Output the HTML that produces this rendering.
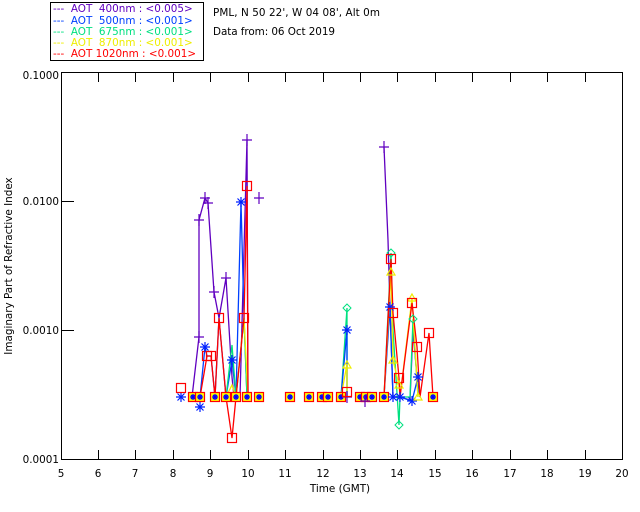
<!DOCTYPE html>
<html><head><meta charset="utf-8"><style>
html,body{margin:0;padding:0;background:#fff;width:640px;height:512px;overflow:hidden}
svg{display:block}
text{font-family:"DejaVu Sans","Liberation Sans",sans-serif;font-size:10.4px}
</style></head><body>
<svg width="640" height="512" viewBox="0 0 640 512" xmlns="http://www.w3.org/2000/svg">
<defs>
<g id="bm"><rect x="-4.5" y="-4.5" width="9" height="9" fill="#ff0" stroke="#f00" stroke-width="1.2"/><path d="M-3 0H3M0-3V3M-2-2L2 2M-2 2L2-2" stroke="#00f" stroke-width="1.3"/></g>
<g id="sq"><rect x="-4.5" y="-4.5" width="9" height="9" fill="none" stroke="#f00" stroke-width="1.2"/></g>
<g id="as"><path d="M-5 0H5M0-5V5M-3.5-3.5L3.5 3.5M-3.5 3.5L3.5-3.5" stroke="#0020ff" stroke-width="1.2"/></g>
<g id="pl"><path d="M-5 0H5M0-6V6" stroke="#6000c0" stroke-width="1.2"/></g>
<g id="dm"><path d="M0-4L4 0L0 4L-4 0Z" fill="none" stroke="#00e080" stroke-width="1"/></g>
<g id="tr"><path d="M0-4L4 3H-4Z" fill="none" stroke="#ee0" stroke-width="1.2"/></g>
</defs>
<rect x="50.5" y="2.5" width="153" height="58" fill="#fff" stroke="#000"/>
<text x="53" y="12" fill="#6000c0" xml:space="preserve">---  AOT  400nm : &lt;0.005&gt;</text>
<text x="53" y="24" fill="#0040ff" xml:space="preserve">---  AOT  500nm : &lt;0.001&gt;</text>
<text x="53" y="35" fill="#00e080" xml:space="preserve">---  AOT  675nm : &lt;0.001&gt;</text>
<text x="53" y="46" fill="#ee0" xml:space="preserve">---  AOT  870nm : &lt;0.001&gt;</text>
<text x="53" y="57" fill="#f00" xml:space="preserve">---  AOT 1020nm : &lt;0.001&gt;</text>
<text x="213" y="16" fill="#000" textLength="167">PML, N 50 22', W 04 08', Alt 0m</text>
<text x="213" y="35" fill="#000" textLength="122">Data from: 06 Oct 2019</text>
<rect x="61.5" y="72.5" width="561" height="387" fill="none" stroke="#000"/>
<g stroke="#000">
<path d="M62 201.5H74M62 330.5H74"/>
<path d="M98.5 460V450M135.5 460V450M173.5 460V450M210.5 460V450M248.5 460V450M285.5 460V450M323.5 460V450M360.5 460V450M397.5 460V450M435.5 460V450M472.5 460V450M510.5 460V450M547.5 460V450M585.5 460V450"/>
<path d="M98.5 72V82M135.5 72V82M173.5 72V82M210.5 72V82M248.5 72V82M285.5 72V82M323.5 72V82M360.5 72V82M397.5 72V82M435.5 72V82M472.5 72V82M510.5 72V82M547.5 72V82M585.5 72V82"/>
</g>
<g fill="#000" text-anchor="end">
<text x="59" y="79">0.1000</text><text x="59" y="205">0.0100</text><text x="59" y="334">0.0010</text><text x="59" y="463">0.0001</text>
</g>
<g fill="#000" text-anchor="middle">
<text x="61" y="477">5</text><text x="98" y="477">6</text><text x="135" y="477">7</text><text x="173" y="477">8</text><text x="210" y="477">9</text><text x="248" y="477">10</text><text x="285" y="477">11</text><text x="323" y="477">12</text><text x="360" y="477">13</text><text x="397" y="477">14</text><text x="435" y="477">15</text><text x="472" y="477">16</text><text x="510" y="477">17</text><text x="547" y="477">18</text><text x="585" y="477">19</text><text x="622" y="477">20</text>
<text x="340" y="492">Time (GMT)</text>
<text transform="translate(12,266) rotate(-90)">Imaginary Part of Refractive Index</text>
</g>
<g fill="none" stroke-width="1.3">
<polyline stroke="#6000c0" points="192,397 199,337 199,220 205,198 208,203 214,292 219,318 226,278 232,377 234,397 240,397 247,140 248,397"/>
<polyline stroke="#0040ff" points="200,397 205,347 207,356 211,356 215,397 219,318 226,397 232,360 236,397 241,202 244,318 247,397"/>
<polyline stroke="#00e080" points="226,397 232,345 236,397 244,318 247,397"/>
<polyline stroke="#ee0" points="226,397 232,385 236,397 244,318 248,397"/>
<polyline stroke="#f00" points="193,397 200,397 207,356 211,356 215,397 219,318 226,397 232,438 236,397 244,318 247,186 248,397"/>
<polyline stroke="#00e080" points="341,397 347,308 347,397"/>
<polyline stroke="#0040ff" points="341,397 347,330 347,397"/>
<polyline stroke="#ee0" points="341,397 347,364 347,392"/>
<polyline stroke="#6000c0" points="384,147 388,240 390,307 393,397 395,397 400,397 410,400 413,330 417,377 420,397"/>
<polyline stroke="#00e080" points="384,397 391,253 393,330 399,425 400,397 410,397 413,319 418,397"/>
<polyline stroke="#0040ff" points="384,397 390,307 393,397 400,397 412,401 418,377 420,397"/>
<polyline stroke="#ee0" points="384,397 391,272 393,360 399,385 400,397 412,298 418,397"/>
<polyline stroke="#f00" points="384,397 391,259 393,313 399,378 400,397 412,303 417,347 420,397 429,333 433,397"/>
</g>
<g>
<use href="#bm" x="193" y="397"/><use href="#bm" x="200" y="397"/><use href="#bm" x="215" y="397"/><use href="#bm" x="226" y="397"/><use href="#bm" x="236" y="397"/><use href="#bm" x="247" y="397"/><use href="#bm" x="259" y="397"/><use href="#bm" x="290" y="397"/><use href="#bm" x="309" y="397"/><use href="#bm" x="322" y="397"/><use href="#bm" x="328" y="397"/><use href="#bm" x="341" y="397"/><use href="#bm" x="360" y="397"/><use href="#bm" x="366" y="397"/><use href="#bm" x="372" y="397"/><use href="#bm" x="384" y="397"/><use href="#bm" x="433" y="397"/>
</g>
<use href="#as" x="181" y="397"/><use href="#sq" x="181" y="388"/>
<use href="#sq" x="207" y="356"/><use href="#sq" x="211" y="356"/><use href="#sq" x="219" y="318"/><use href="#sq" x="244" y="318"/><use href="#sq" x="247" y="186"/><use href="#sq" x="232" y="438"/>
<use href="#as" x="205" y="347"/><use href="#as" x="200" y="407"/><use href="#as" x="232" y="360"/><use href="#as" x="241" y="202"/>
<use href="#pl" x="199" y="337"/><use href="#pl" x="199" y="220"/><use href="#pl" x="205" y="198"/><use href="#pl" x="208" y="203"/><use href="#pl" x="214" y="292"/><use href="#pl" x="226" y="278"/><use href="#pl" x="247" y="140"/><use href="#pl" x="259" y="198"/>
<use href="#pl" x="384" y="147"/><use href="#pl" x="347" y="397"/><use href="#pl" x="365" y="401"/>
<use href="#dm" x="347" y="308"/><use href="#as" x="347" y="330"/><use href="#tr" x="347" y="365"/><use href="#sq" x="347" y="392"/>
<use href="#dm" x="391" y="253"/><use href="#sq" x="391" y="259"/><use href="#tr" x="391" y="272"/><use href="#as" x="390" y="307"/><use href="#sq" x="393" y="313"/><use href="#tr" x="393" y="360"/><use href="#sq" x="399" y="378"/><use href="#tr" x="399" y="385"/><use href="#dm" x="399" y="425"/><use href="#as" x="393" y="397"/><use href="#as" x="400" y="397"/>
<use href="#tr" x="412" y="298"/><use href="#sq" x="412" y="303"/><use href="#dm" x="413" y="319"/><use href="#sq" x="417" y="347"/><use href="#as" x="418" y="377"/><use href="#as" x="412" y="401"/><use href="#tr" x="418" y="397"/><use href="#sq" x="429" y="333"/>
</svg>
</body></html>
